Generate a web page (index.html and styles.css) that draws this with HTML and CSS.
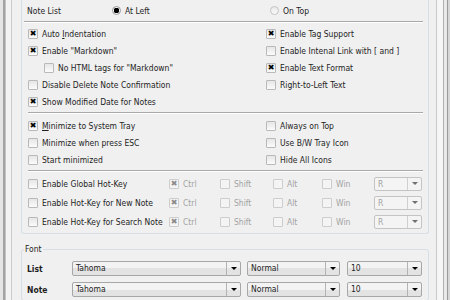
FILE: index.html
```html
<!DOCTYPE html>
<html lang="en">
<head>
    <meta charset="UTF-8">
    <title>Options</title>
    <link rel="stylesheet" href="styles.css">
</head>
<body>
    <div class="window">
        <div class="edge-left"></div>
        <div class="page">
            <div class="group group-main">
                <div class="note-list">
                    <span>Note List</span>
                    <label class="opt"><span class="radio on"></span>At Left</label>
                    <label class="opt on-top"><span class="radio"></span>On Top</label>
                </div>
                <div class="sep sep-first"></div>

                <div class="cols">
                    <div class="col">
                        <label class="check"><span class="box on"></span><span>Auto <u>I</u>ndentation</span></label>
                        <label class="check"><span class="box on"></span>Enable "Markdown"</label>
                        <label class="check indent"><span class="box"></span>No HTML tags for "Markdown"</label>
                        <label class="check"><span class="box"></span>Disable Delete Note Confirmation</label>
                        <label class="check"><span class="box on"></span>Show Modified Date for Notes</label>
                    </div>
                    <div class="col">
                        <label class="check"><span class="box on"></span>Enable Tag Support</label>
                        <label class="check"><span class="box"></span>Enable Intenal Link with [ and ]</label>
                        <label class="check"><span class="box on"></span>Enable Text Format</label>
                        <label class="check"><span class="box"></span>Right-to-Left Text</label>
                    </div>
                </div>
                <div class="sep sep-tray"></div>

                <div class="cols">
                    <div class="col">
                        <label class="check"><span class="box on"></span><span><u>M</u>inimize to System Tray</span></label>
                        <label class="check"><span class="box"></span>Minimize when press ESC</label>
                        <label class="check"><span class="box"></span>Start minimized</label>
                    </div>
                    <div class="col">
                        <label class="check"><span class="box"></span>Always on Top</label>
                        <label class="check"><span class="box"></span>Use B/W Tray Icon</label>
                        <label class="check"><span class="box"></span>Hide All Icons</label>
                    </div>
                </div>
                <div class="sep sep-keys"></div>

                <div class="hotkeys">
                    <label class="check"><span class="box"></span>Enable Global Hot-Key</label>
                    <label class="check off"><span class="box on"></span>Ctrl</label>
                    <label class="check off"><span class="box"></span>Shift</label>
                    <label class="check off"><span class="box"></span>Alt</label>
                    <label class="check off"><span class="box"></span>Win</label>
                    <div class="combo off"><span class="val">R</span><span class="arrow"></span></div>

                    <label class="check"><span class="box"></span>Enable Hot-Key for New Note</label>
                    <label class="check off"><span class="box on"></span>Ctrl</label>
                    <label class="check off"><span class="box"></span>Shift</label>
                    <label class="check off"><span class="box"></span>Alt</label>
                    <label class="check off"><span class="box"></span>Win</label>
                    <div class="combo off"><span class="val">R</span><span class="arrow"></span></div>

                    <label class="check"><span class="box"></span>Enable Hot-Key for Search Note</label>
                    <label class="check off"><span class="box on"></span>Ctrl</label>
                    <label class="check off"><span class="box"></span>Shift</label>
                    <label class="check off"><span class="box"></span>Alt</label>
                    <label class="check off"><span class="box"></span>Win</label>
                    <div class="combo off"><span class="val">R</span><span class="arrow"></span></div>
                </div>
            </div>

            <fieldset class="group group-font">
                <legend>Font</legend>
                <div class="font-row">
                    <b>List</b>
                    <div class="combo face"><span class="val">Tahoma</span><span class="arrow"></span></div>
                    <div class="combo style"><span class="val">Normal</span><span class="arrow"></span></div>
                    <div class="combo size"><span class="val">10</span><span class="arrow"></span></div>
                </div>
                <div class="font-row">
                    <b>Note</b>
                    <div class="combo face"><span class="val">Tahoma</span><span class="arrow"></span></div>
                    <div class="combo style"><span class="val">Normal</span><span class="arrow"></span></div>
                    <div class="combo size"><span class="val">10</span><span class="arrow"></span></div>
                </div>
            </fieldset>
        </div>
        <div class="edge-right"></div>
    </div>
</body>
</html>
```

FILE: styles.css
```css
body {
    margin: 0;
    background: #f0f0f0;
    font-family: "DejaVu Sans Condensed", "Liberation Sans", sans-serif;
    font-size: 8.5px;
    color: #1e1e1e;
    overflow: hidden;
}
.window {
    display: flex;
    height: 300px;
}
.edge-left {
    width: 12px;
    background: linear-gradient(to right, #e4e4e4 0 3px, #a3a3a3 3px 5px, #c4c4c4 5px 6px, #f3f3f3 6px 11px, #cbcbcb 11px 12px);
}
.edge-right {
    width: 21px;
    background: linear-gradient(to right, #f0f0f0 0 7px, #c9c9c9 7px 8px, #f6f6f6 8px 14px, #b1b1b1 14px 15px, #e9e9e9 15px 18px, #9a9a9a 18px 19px, #d6d6d6 19px);
}
.page {
    flex: 1;
    padding-left: 9px;
}
.group {
    border: 1px solid #d5dfe5;
    border-radius: 3px;
    padding: 0 5px 0 6px;
}
.group-main {
    border-top: none;
    border-radius: 0 0 3px 3px;
    padding-bottom: 2px;
}
.note-list {
    display: grid;
    grid-template-columns: 84px 158px auto;
    align-items: center;
    height: 21px;
}
.note-list > span {
    margin-left: -1px;
}
.opt {
    display: flex;
    align-items: center;
}
.radio {
    width: 9px;
    height: 9px;
    box-sizing: border-box;
    border: 1px solid #c3c3c3;
    border-radius: 50%;
    background: linear-gradient(#e9e9e9, #fafafa);
    margin-right: 4px;
}
.radio.on {
    border-color: #9a9a9a;
    background: radial-gradient(circle, #000 0 2.6px, #f4f4f4 3px);
}
.sep {
    border-top: 1px solid #a9a9a9;
    border-bottom: 1px solid #fff;
}
.sep-first {
    margin: 0 0 2px -4px;
}
.sep-tray {
    margin: 2px 0 3px;
}
.sep-keys {
    margin: 2px 0 2px;
}
.cols {
    display: flex;
}
.col {
    display: flex;
    flex-direction: column;
}
.col:first-child {
    width: 238px;
}
.check {
    display: flex;
    align-items: center;
    height: 17px;
    white-space: nowrap;
}
.check.indent {
    padding-left: 16px;
}
.box {
    width: 10px;
    height: 10px;
    box-sizing: border-box;
    border: 1px solid #b9b9b9;
    border-radius: 1px;
    background: linear-gradient(#e6e6e6, #fbfbfb);
    margin-right: 4px;
    display: flex;
    align-items: center;
    justify-content: center;
}
.box.on::after {
    content: "\2716";
    font-family: "DejaVu Sans", sans-serif;
    font-size: 8px;
    line-height: 8px;
    color: #000;
}
.check.off {
    color: #a3a3a3;
}
.check.off .box {
    border-color: #cdcdcd;
    background: #f4f4f4;
}
.check.off .box.on::after {
    color: #8a8a8a;
}
.hotkeys {
    display: grid;
    grid-template-columns: 141px 51px 53px 49px 52px 48px;
    grid-auto-rows: 19px;
    align-items: center;
}
.combo {
    display: flex;
    height: 15px;
    box-sizing: border-box;
    border: 1px solid #a7a7a7;
    border-radius: 2px;
    background: linear-gradient(#f3f3f3 0 50%, #e3e3e3 50%);
}
.combo .val {
    flex: 1;
    padding-left: 3px;
    line-height: 13px;
}
.combo .arrow {
    width: 13px;
    border-left: 1px solid #b3b3b3;
    display: flex;
    align-items: center;
    justify-content: center;
}
.combo .arrow::after {
    content: "";
    border-left: 3px solid transparent;
    border-right: 3px solid transparent;
    border-top: 3px solid #000;
}
.combo.off {
    height: 14px;
    border-color: #c4c4c4;
    background: #f4f4f4;
    color: #a3a3a3;
}
.combo.off .val {
    line-height: 12px;
}
.combo.off .arrow {
    border-left-color: #d0d0d0;
}
.combo.off .arrow::after {
    border-top-color: #6f6f6f;
}
.group-font {
    margin: 10px 0 0;
    padding-top: 3px;
    min-width: 0;
}
.group-font legend {
    padding: 0 1px;
    margin-left: -4px;
    line-height: 11px;
}
.font-row {
    display: grid;
    grid-template-columns: 44px 175px 100px 75px;
    align-items: center;
    height: 21px;
}
.font-row b {
    margin-left: -1px;
}
.combo.face {
    width: 169px;
}
.combo.style {
    width: 93px;
}
```
